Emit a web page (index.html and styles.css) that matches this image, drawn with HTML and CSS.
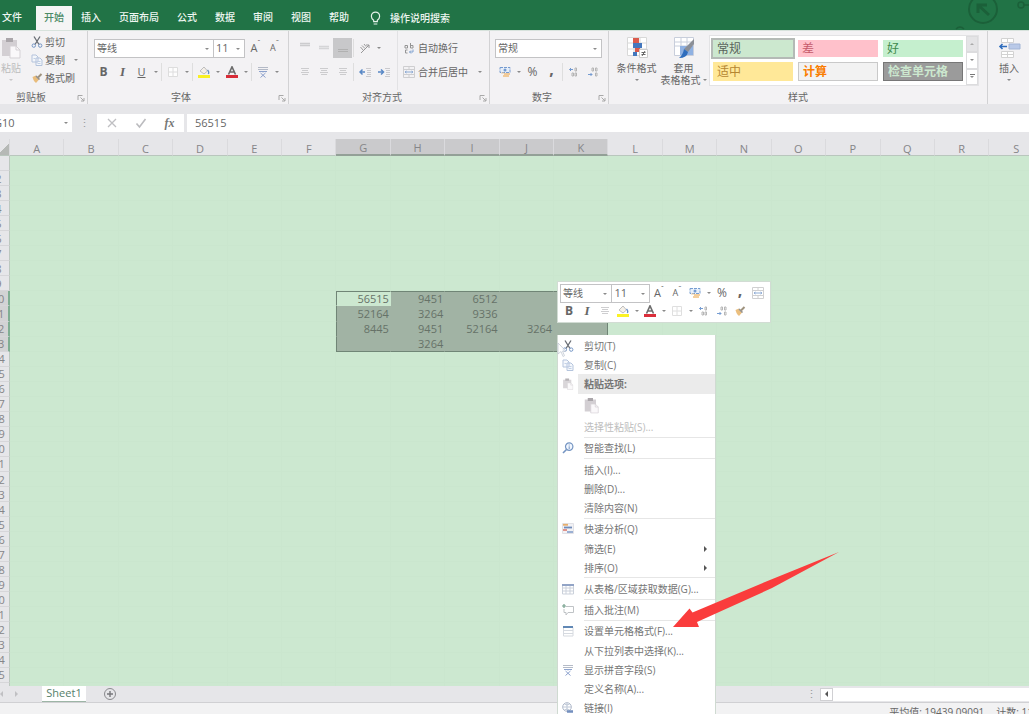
FILE: index.html
```html
<!DOCTYPE html>
<html lang="zh-CN">
<head>
<meta charset="utf-8">
<title>Sheet1</title>
<link rel="stylesheet" href="styles.css">
</head>
<body>
<svg class="defs" aria-hidden="true">
  <symbol id="i-cut" viewBox="0 0 12 12"><path d="M3 0.5L8 8.5M9 0.5L4 8.5" stroke="#50565e" stroke-width="1.3" fill="none"/><circle cx="2.8" cy="9.6" r="1.7" fill="none" stroke="#5f86bd"/><circle cx="9.2" cy="9.6" r="1.7" fill="none" stroke="#5f86bd"/></symbol>
  <symbol id="i-copy" viewBox="0 0 12 12"><path d="M1 1h4l2 2v5H1zM5 4h4l2 2v5.5H5z" fill="#f4f7fc" stroke="#a9bbd8"/><path d="M6.500 7.500h3M6.500 9.500h3M2.500 4.500h2" stroke="#b9c9e2"/></symbol>
  <symbol id="i-brush" viewBox="0 0 12 12"><path d="M1.500 5l3.500-1.500L8.500 7 5 11 3.500 9.500 2.500 8z" fill="#e8b468"/><path d="M5 4l3.500 3.500" stroke="#7d7f86" stroke-width="1.400"/><path d="M7 5.500L10.500 2" stroke="#8f8168" stroke-width="2"/></symbol>
  <symbol id="i-paste" viewBox="0 0 20 22"><path d="M1 3h15v16H1z" fill="#d3cfd3"/><path d="M5 1h7v4H5z" fill="#aaa6aa"/><path d="M9 9h6l4 4v8H9z" fill="#faf8fa" stroke="#d5d1d5"/><path d="M15 9v4h4" fill="none" stroke="#d5d1d5"/></symbol>
  <symbol id="i-top" viewBox="0 0 12 12"><path d="M1 1.500h10M1 3.500h10" stroke="#c6c6c8" stroke-width="1.500"/></symbol>
  <symbol id="i-mid" viewBox="0 0 12 12"><path d="M1 4.500h10M1 6.500h10" stroke="#d0d0d2" stroke-width="1.500"/></symbol>
  <symbol id="i-bot" viewBox="0 0 12 12"><path d="M1 7.500h10M1 9.500h10" stroke="#adadad"/></symbol>
  <symbol id="i-lines" viewBox="0 0 12 12"><path d="M2 2.500h8M3 4.500h6M2 6.500h8M3 8.500h6" stroke="#c6c6c8"/></symbol>
  <symbol id="i-orient" viewBox="0 0 12 12"><path d="M2 11L10 3M10 3v3M10 3H7" stroke="#888" fill="none"/><path d="M1.500 5l2.500 3M3 3.500l3 3M5 2l2 2.500" stroke="#8d8d8d" fill="none"/></symbol>
  <symbol id="i-out" viewBox="0 0 12 12"><path d="M6 6H1M3.500 3.500L1 6l2.500 2.500" stroke="#3f77be" stroke-width="1.500" fill="none"/><path d="M7 2.500h5M8 4.500h4M8 6.500h4M8 8.500h4M7 10.500h5" stroke="#c4c4c8"/></symbol>
  <symbol id="i-in" viewBox="0 0 12 12"><path d="M0 6h5M3 3.500L5.500 6 3 8.500" stroke="#3f77be" stroke-width="1.500" fill="none"/><path d="M7 2.500h5M8 4.500h4M8 6.500h4M8 8.500h4M7 10.500h5" stroke="#c4c4c8"/></symbol>
  <symbol id="i-wrap" viewBox="0 0 12 12"><path d="M2 3.500h2.500V6H2V3.500M7.500 1v5H10V3.500H7.500M4.500 8H2.500v3h2" fill="none" stroke="#858585"/><path d="M10 7.500V10H6.500M8 8.500L6.500 10 8 11.500" fill="none" stroke="#6d95ca"/></symbol>
  <symbol id="i-merge" viewBox="0 0 12 12"><path d="M0.500 0.500h11v11h-11zM6 0.500v3M6 8.500v3M0.500 3.500h11M0.500 8.500h11" fill="none" stroke="#c8c8ca"/><path d="M2 6h8M3.500 5L2 6l1.500 1M8.500 5L10 6 8.500 7" fill="none" stroke="#7d9fcf"/></symbol>
  <symbol id="i-money" viewBox="0 0 12 12"><path d="M1 1.500h10v5H1z" fill="#e4eefa" stroke="#5f8ccb" stroke-dasharray="3 1"/><circle cx="6" cy="4" r="1.500" fill="#5f8ccb"/><path d="M5 8h6M4 10h6" stroke="#efb567" stroke-width="1.600"/><path d="M2 7h3" stroke="#e8c493"/></symbol>
  <symbol id="i-dec1" viewBox="0 0 12 12"><path d="M5 3.500H1.500M3 2L1.500 3.500 3 5" stroke="#5f8ccb" fill="none"/><path d="M7 2h1.500v3H7zM4 7h1.500v3H4zM7 7h1.500v3H7z" stroke="#aaa" fill="none"/></symbol>
  <symbol id="i-dec2" viewBox="0 0 12 12"><path d="M1 8.500h4M3.500 7L5 8.500 3.500 10" stroke="#5f8ccb" fill="none"/><path d="M5 2h1.500v3H5zM8.500 2H10v3H8.500zM8.500 7H10v3H8.500z" stroke="#aaa" fill="none"/></symbol>
  <symbol id="i-border" viewBox="0 0 12 12"><path d="M1.500 1.500h9v9h-9zM6 1.500v9M1.500 6h9" fill="#fff" stroke="#dadada"/></symbol>
  <symbol id="i-fill" viewBox="0 0 12 12"><path d="M2 5l4-4 3.500 4L6 8z" fill="#f5efe6" stroke="#b4b4b4"/><path d="M9.500 4q2 2 .8 4" stroke="#4f7fbf" fill="none" stroke-width="1.300"/><path d="M0 9h12v3H0z" fill="#fbf000"/></symbol>
  <symbol id="i-color" viewBox="0 0 12 12"><path d="M2.500 8.500L6 0.800 9.500 8.500M3.800 6h4.400" fill="none" stroke="#555" stroke-width="1.600"/><path d="M0 9h12v3H0z" fill="#d40a18"/></symbol>
  <symbol id="i-phon" viewBox="0 0 12 12"><path d="M1 1.500h10M1 3.500h10" stroke="#a9b0be" fill="none"/><path d="M2 5.500h8M6 5v1.500M3.500 7L8.500 11.500M8.500 7L3.500 11.500" stroke="#7b93c6" fill="none"/></symbol>
  <symbol id="i-launch" viewBox="0 0 8 8"><path d="M1 6V1.500h4.500M3.500 3.500L7 7M7 4v3H4" stroke="#a8a8a8" fill="none"/></symbol>
  <symbol id="i-cond" viewBox="0 0 24 24"><path d="M2.500 1.500h19v18h-19zM2.500 7h19M2.500 13h19M9 1.500v18M15 1.500v18" fill="#fff" stroke="#d8d8d8"/><path d="M8 2h6v5H8zM10 12h5v4h-5z" fill="#db5a4c"/><path d="M8 7h9v5H8zM8 16h4v4H8z" fill="#4477bd"/><path d="M14.500 13.500h8v8h-8z" fill="#fff" stroke="#ccc"/><path d="M16.500 16.500h4M16.500 18.500h4M20 15l-3 5" stroke="#666"/></symbol>
  <symbol id="i-fmt" viewBox="0 0 24 24"><path d="M2.500 1.500h19v18h-19zM2.500 6h19M2.500 10h19M9 1.500v18M15 1.500v18" fill="#fff" stroke="#c8cedb"/><path d="M8 10h13v9H8z" fill="#8fb1e2"/><path d="M22 3v5l-6 8-4-3z" fill="#8b8f97"/><path d="M12 13l4 3q-1 6-9 6 4-3 5-9z" fill="#2f6dbd"/></symbol>
  <symbol id="i-ins" viewBox="0 0 24 24"><path d="M4.500 2.500h12v4h-12zM10.500 2.500v4M4.500 15.500h12v6h-12zM10.500 15.500v6M4.500 18.500h12" fill="#fff" stroke="#d2d2d2"/><path d="M12 8h11v5H12z" fill="#b9c9e8" stroke="#a3b5d6"/><path d="M10 10.500H3M5.500 8L3 10.500 5.500 13" stroke="#2f6dbd" stroke-width="1.600" fill="none"/></symbol>
  <symbol id="i-find" viewBox="0 0 12 12"><circle cx="7.200" cy="4.600" r="3.700" fill="#f0f6ff" stroke="#5d83b8" stroke-width="1.200"/><path d="M4.500 7.500L1 11" stroke="#5d83b8" stroke-width="1.600"/><path d="M7.200 2.500v1M7.200 4.300v2.700" stroke="#5d83b8"/></symbol>
  <symbol id="i-quick" viewBox="0 0 12 12"><path d="M0.500 0.500h11v10h-11z" fill="#f0f0f4" stroke="#dcdce2"/><path d="M1 1.800h5" stroke="#e3a053" stroke-width="1.800"/><path d="M2 4.500h8" stroke="#5878ae" stroke-width="1.800"/><path d="M1 7h4" stroke="#d9746b" stroke-width="1.800"/><path d="M5 9h6" stroke="#7e9ac8" stroke-width="1.800"/></symbol>
  <symbol id="i-table" viewBox="0 0 12 12"><path d="M0.500 1.500h11v9.500h-11zM4 2v9M8 2v9M0.500 5h11M0.500 8h11" fill="#fff" stroke="#c3c9d5"/><path d="M0 1h12v2H0z" fill="#8095bd"/></symbol>
  <symbol id="i-note" viewBox="0 0 12 12"><path d="M4 2.500h7.500v6H6l-2 2.500V8.500H2V5" fill="none" stroke="#b5b9bd"/><path d="M2 0v4M0 2h4" stroke="#5d8f78" stroke-width="1.200"/></symbol>
  <symbol id="i-cells" viewBox="0 0 12 12"><path d="M1.500 2.500h9.500v8.500H1.500zM1.500 5.500h9.500M1.500 8.500h9.500" fill="#fff" stroke="#d0d4db"/><path d="M1 1h10v2H1z" fill="#4674a9"/></symbol>
  <symbol id="i-link" viewBox="0 0 12 12"><circle cx="5" cy="5" r="4.300" fill="#fff" stroke="#9fabc0"/><path d="M5 1v8M1 5h8M2.500 2q2.500 2 5 0M2.500 8q2.500-2 5 0" stroke="#b4bfd1" fill="none"/><path d="M5 9.500h3M7 9.500h4" stroke="#5b7cb4" stroke-width="2.400"/></symbol>
</svg>

<div class="app">
  <header class="titlebar">
    <nav class="tabs">
      <a class="tab tab-file" href="#">文件</a>
      <a class="tab is-active" href="#">开始</a>
      <a class="tab" href="#">插入</a>
      <a class="tab" href="#">页面布局</a>
      <a class="tab" href="#">公式</a>
      <a class="tab" href="#">数据</a>
      <a class="tab" href="#">审阅</a>
      <a class="tab" href="#">视图</a>
      <a class="tab" href="#">帮助</a>
      <a class="tab tell" href="#"><svg class="bulb" viewBox="0 0 12 16"><path d="M4 11.500V10Q1.500 8 1.500 5.500a4.500 4.500 0 0 1 9 0Q10.500 8 8 10v1.500zM4 14h4" fill="none" stroke="#e6f2ea" stroke-width="1.300"/></svg>操作说明搜索</a>
    </nav>
    <svg class="deco" viewBox="0 0 75 30" aria-hidden="true"><g fill="none" stroke="#1b6039"><circle cx="29" cy="9" r="14" stroke-width="2"/><path d="M35 15L24 5M24 13V5h9" stroke-width="3"/><circle cx="67" cy="5" r="3" stroke-width="1.500"/><path d="M70 5h5" stroke-width="1.500"/><path d="M2 29q4-4 8 0" stroke-width="1.500"/></g></svg>
  </header>

  <section class="ribbon">
    <div class="group g-clip">
      <div class="body">
        <button class="big paste"><svg viewBox="0 0 20 22"><use href="#i-paste"/></svg><span>粘贴</span><i class="caret"></i></button>
        <div class="stack">
          <button class="item"><svg class="ic"><use href="#i-cut"/></svg>剪切</button>
          <button class="item"><svg class="ic"><use href="#i-copy"/></svg>复制<i class="caret far"></i></button>
          <button class="item"><svg class="ic"><use href="#i-brush"/></svg>格式刷</button>
        </div>
      </div>
      <div class="label"><span>剪贴板</span><svg class="launch"><use href="#i-launch"/></svg></div>
    </div>

    <div class="group g-font">
      <div class="body rows">
        <div class="row">
          <span class="pick pick-font"><select aria-label="字体"><option>等线</option></select></span><span class="pick pick-size"><select aria-label="字号"><option>11</option></select></span>
          <button class="tool grow" aria-label="增大字号">A<sup>ˆ</sup></button>
          <button class="tool grow small" aria-label="减小字号">A<sup>ˇ</sup></button>
        </div>
        <div class="row">
          <button class="tool bold">B</button><button class="tool ital">I</button><button class="tool under">U</button><i class="caret"></i><i class="sep"></i>
          <button class="tool" aria-label="边框"><svg class="ic"><use href="#i-border"/></svg></button><i class="caret"></i><i class="sep"></i>
          <button class="tool" aria-label="填充颜色"><svg class="ic"><use href="#i-fill"/></svg></button><i class="caret"></i>
          <button class="tool" aria-label="字体颜色"><svg class="ic"><use href="#i-color"/></svg></button><i class="caret"></i><i class="sep"></i>
          <button class="tool" aria-label="拼音"><svg class="ic"><use href="#i-phon"/></svg></button><i class="caret"></i>
        </div>
      </div>
      <div class="label"><span>字体</span><svg class="launch"><use href="#i-launch"/></svg></div>
    </div>

    <div class="group g-align">
      <div class="body">
        <div class="rows align-left">
          <div class="row">
            <button class="tool" aria-label="顶端对齐"><svg class="ic"><use href="#i-top"/></svg></button><button class="tool" aria-label="垂直居中"><svg class="ic"><use href="#i-mid"/></svg></button><button class="tool is-on" aria-label="底端对齐"><svg class="ic"><use href="#i-bot"/></svg></button><i class="sep"></i>
            <button class="tool" aria-label="方向"><svg class="ic"><use href="#i-orient"/></svg></button><i class="caret"></i>
          </div>
          <div class="row">
            <button class="tool" aria-label="左对齐"><svg class="ic"><use href="#i-lines"/></svg></button><button class="tool" aria-label="居中"><svg class="ic"><use href="#i-lines"/></svg></button><button class="tool" aria-label="右对齐"><svg class="ic"><use href="#i-lines"/></svg></button><i class="sep"></i>
            <button class="tool" aria-label="减少缩进量"><svg class="ic"><use href="#i-out"/></svg></button><button class="tool" aria-label="增加缩进量"><svg class="ic"><use href="#i-in"/></svg></button>
          </div>
        </div>
        <div class="rows align-right">
          <button class="item"><svg class="ic"><use href="#i-wrap"/></svg>自动换行</button>
          <button class="item"><svg class="ic"><use href="#i-merge"/></svg>合并后居中<i class="caret far"></i></button>
        </div>
      </div>
      <div class="label"><span>对齐方式</span><svg class="launch"><use href="#i-launch"/></svg></div>
    </div>

    <div class="group g-num">
      <div class="body rows">
        <div class="row"><span class="pick pick-num"><select aria-label="数字格式"><option>常规</option></select></span></div>
        <div class="row">
          <button class="tool" aria-label="会计数字格式"><svg class="ic"><use href="#i-money"/></svg></button><i class="caret"></i>
          <button class="tool pct">%</button><button class="tool comma">,</button><i class="sep"></i>
          <button class="tool" aria-label="增加小数位数"><svg class="ic"><use href="#i-dec1"/></svg></button><button class="tool" aria-label="减少小数位数"><svg class="ic"><use href="#i-dec2"/></svg></button>
        </div>
      </div>
      <div class="label"><span>数字</span><svg class="launch"><use href="#i-launch"/></svg></div>
    </div>

    <div class="group g-style">
      <div class="body">
        <button class="big"><svg><use href="#i-cond"/></svg><span>条件格式</span><i class="caret"></i></button>
        <button class="big"><svg><use href="#i-fmt"/></svg><span>套用</span><span class="with-caret">表格格式<i class="caret"></i></span></button>
        <div class="gallery">
          <div class="swatches">
            <button class="sw sw-normal">常规</button><button class="sw sw-bad">差</button><button class="sw sw-good">好</button>
            <button class="sw sw-neutral">适中</button><button class="sw sw-calc">计算</button><button class="sw sw-check">检查单元格</button>
          </div>
          <div class="scroller"><button class="off" aria-label="上一行"><i class="caret up"></i></button><button aria-label="下一行"><i class="caret"></i></button><button aria-label="其他"><i class="caret bar"></i></button></div>
        </div>
      </div>
      <div class="label"><span>样式</span></div>
    </div>

    <div class="group g-cells">
      <div class="body"><button class="big"><svg><use href="#i-ins"/></svg><span>插入</span><i class="caret"></i></button></div>
    </div>
  </section>

  <section class="formula">
    <div class="namebox"><input aria-label="名称框" value="G10"><i class="caret"></i></div>
    <span class="dots">⋮</span>
    <div class="fxbox">
      <button aria-label="取消"><svg class="ic" viewBox="0 0 12 12"><path d="M2 2l8 8M10 2l-8 8" stroke="#b5b5b8" stroke-width="1.300"/></svg></button>
      <button aria-label="输入"><svg class="ic" viewBox="0 0 12 12"><path d="M1.500 6.500l3 3.500 6-8" fill="none" stroke="#b0b0b4" stroke-width="1.600"/></svg></button>
      <button class="fx">fx</button>
    </div>
    <input class="formula-input" aria-label="编辑栏" value="56515">
  </section>

  <main class="sheet"><table class="cells" id="cells"></table></main>

  <footer class="sheetbar">
    <span class="navs"><i class="tri left"></i><i class="tri right"></i></span>
    <a class="sheet-tab" href="#">Sheet1</a>
    <button class="add" aria-label="新工作表"><svg viewBox="0 0 14 14"><circle cx="7" cy="7" r="5.500" fill="none" stroke="#8a8a8e"/><path d="M7 4v6M4 7h6" stroke="#77777b" stroke-width="1.400"/></svg></button>
    <span class="dots">⋮</span>
    <button class="scroll-btn" aria-label="向左滚动"><i class="tri left dark"></i></button>
    <div class="track"></div>
  </footer>
  <div class="status"><span>平均值: 19439.09091</span><span>计数: 11</span></div>

  <div class="minibar">
    <div class="row">
      <span class="pick mini-font"><select aria-label="字体"><option>等线</option></select></span><span class="pick mini-size"><select aria-label="字号"><option>11</option></select></span>
      <button class="tool grow" aria-label="增大字号">A<sup>ˆ</sup></button><button class="tool grow small" aria-label="减小字号">A<sup>ˇ</sup></button><button class="tool" aria-label="会计数字格式"><svg class="ic"><use href="#i-money"/></svg></button><i class="caret"></i><button class="tool pct">%</button><button class="tool comma">,</button><button class="tool" aria-label="合并"><svg class="ic"><use href="#i-merge"/></svg></button>
    </div>
    <div class="row">
      <button class="tool bold">B</button><button class="tool ital">I</button><button class="tool" aria-label="居中"><svg class="ic"><use href="#i-lines"/></svg></button><button class="tool" aria-label="填充颜色"><svg class="ic"><use href="#i-fill"/></svg></button><i class="caret"></i><button class="tool" aria-label="字体颜色"><svg class="ic"><use href="#i-color"/></svg></button><i class="caret"></i><button class="tool" aria-label="边框"><svg class="ic"><use href="#i-border"/></svg></button><i class="caret"></i><button class="tool" aria-label="增加小数位数"><svg class="ic"><use href="#i-dec1"/></svg></button><button class="tool" aria-label="减少小数位数"><svg class="ic"><use href="#i-dec2"/></svg></button><button class="tool" aria-label="格式刷"><svg class="ic"><use href="#i-brush"/></svg></button>
    </div>
  </div>

  <div class="menu">
    <button><svg class="ic"><use href="#i-cut"/></svg><span>剪切(T)</span></button>
    <button><svg class="ic"><use href="#i-copy"/></svg><span>复制(C)</span></button>
    <div class="head"><svg class="ic" viewBox="0 0 20 22"><use href="#i-paste"/></svg><span>粘贴选项:</span></div>
    <button class="paste-opt" aria-label="粘贴"><svg viewBox="0 0 20 22"><use href="#i-paste"/></svg></button>
    <button class="off"><span>选择性粘贴(S)...</span></button>
    <hr>
    <button><svg class="ic"><use href="#i-find"/></svg><span>智能查找(L)</span></button>
    <hr>
    <button><span>插入(I)...</span></button>
    <button><span>删除(D)...</span></button>
    <button><span>清除内容(N)</span></button>
    <hr>
    <button><svg class="ic"><use href="#i-quick"/></svg><span>快速分析(Q)</span></button>
    <button><span>筛选(E)</span><i class="tri right dark"></i></button>
    <button><span>排序(O)</span><i class="tri right dark"></i></button>
    <hr>
    <button><svg class="ic"><use href="#i-table"/></svg><span>从表格/区域获取数据(G)...</span></button>
    <hr>
    <button><svg class="ic"><use href="#i-note"/></svg><span>插入批注(M)</span></button>
    <hr>
    <button><svg class="ic"><use href="#i-cells"/></svg><span>设置单元格格式(F)...</span></button>
    <button><span>从下拉列表中选择(K)...</span></button>
    <button><svg class="ic"><use href="#i-phon"/></svg><span>显示拼音字段(S)</span></button>
    <button><span>定义名称(A)...</span></button>
    <button><svg class="ic"><use href="#i-link"/></svg><span>链接(I)</span></button>
  </div>

  <svg class="pointer" viewBox="0 0 10 16" aria-hidden="true"><path d="M1 1v11l3-2.500 2 5 1.500-.8-2-4.500h3.500z" fill="#fff" fill-opacity=".7" stroke="#c3c9d3" stroke-width=".8"/></svg>
  <svg class="arrow" viewBox="0 0 168 78" aria-hidden="true"><path d="M1 76L17.500 57.500 20.500 61.500 93 31 167 1 100 37 25 71 27 76z" fill="#fa3c3c"/></svg>
</div>
<script src="script.js"></script>
</body>
</html>
```
FILE: styles.css
```css
* { box-sizing: border-box; }

body {
  margin: 0;
  font: 10px/12px "Open Sans", "Noto Sans CJK SC", sans-serif;
  color: #666;
}

button, input, select {
  font: inherit;
  color: inherit;
  background: none;
  border: 0;
  padding: 0;
  margin: 0;
  border-radius: 0;
  white-space: nowrap;
}

a { color: inherit; text-decoration: none; }
.defs { display: none; }
.ic { width: 12px; height: 12px; flex: none; display: block; opacity: .85; }

.app {
  position: relative;
  display: flex;
  flex-direction: column;
  height: 100vh;
  overflow: hidden;
  background: #e6e6e9;
}

/* Small glyphs */
.caret {
  display: block;
  flex: none;
  width: 9px;
  height: 3px;
}
.caret::before {
  content: "";
  display: block;
  width: 0;
  margin: 0 auto;
  border: 2px solid transparent;
  border-top-color: #8a8a8a;
  border-bottom: 0;
}
.caret.up::before { transform: rotate(180deg); border-top-color: #aaa; }
.caret.bar { border-top: 1px solid #777; width: 5px; height: 5px; padding-top: 1px; }
.sep { flex: none; width: 1px; height: 18px; margin: 0 1px; background: #dedede; }
.tri { display: block; width: 0; border: 3px solid transparent; }
.tri.left { border-right-color: #c0c0c3; border-left: 0; }
.tri.right { border-left-color: #c0c0c3; border-right: 0; }
.tri.left.dark { border-right-color: #555; }
.tri.right.dark { border-left-color: #555; }
.dots { color: #999; font-size: 11px; text-align: center; }

/* Title bar */
.titlebar {
  flex: none;
  display: flex;
  justify-content: space-between;
  height: 30px;
  background: #217346;
}
.tabs { display: flex; align-items: flex-end; }
.tab {
  height: 24px;
  padding: 0 9px;
  line-height: 23px;
  color: #eef6f1;
  font-weight: 500;
  white-space: nowrap;
}
.tab-file { padding: 0 14px 0 2px; }
.tab.is-active { background: #f5f5f5; color: #4b8a66; padding: 0 8px; }
.tell { display: flex; align-items: center; gap: 9px; padding-left: 12px; }
.bulb { width: 11px; height: 15px; }
.deco { width: 75px; height: 30px; }

/* Ribbon */
.ribbon {
  flex: none;
  display: flex;
  height: 74px;
  background: #f3f2f4;
  border-top: 1px solid #d7e2dc;
}
.group {
  flex: none;
  display: flex;
  flex-direction: column;
  border-right: 1px solid #d2d2d4;
}
.body { flex: 1; display: flex; min-height: 0; }
.label { display: flex; align-items: center; height: 14px; }
.label span { flex: 1; text-align: center; }
.launch { width: 8px; height: 8px; margin: 1px 2px 0 4px; }
.row { display: flex; align-items: center; height: 20px; }
.rows { flex-direction: column; gap: 4px; padding-top: 7px; }
.tool {
  display: flex;
  align-items: center;
  justify-content: center;
  flex: none;
  width: 19px;
  height: 20px;
}
.tool.is-on { background: #c8c8ca; }
.bold { font-weight: 700; font-size: 12px; }
.comma { font-weight: 700; font-size: 16px; padding-bottom: 7px; }
.ital { font-weight: 700; font-style: italic; font-size: 13px; font-family: "Liberation Serif", serif; }
.under { font-size: 11px; text-decoration: underline; }
.pct { font-size: 12px; }
.grow { font-size: 11px; }
.grow.small { font-size: 9px; }
.grow sup { font-size: 8px; line-height: 8px; align-self: flex-start; }
.item { display: flex; align-items: center; gap: 3px; height: 20px; text-align: left; }
.far { margin-left: 4px; }

.pick { position: relative; display: block; height: 19px; background: #fff; border: 1px solid #c3c3c5; }
.pick + .pick { border-left: 0; }
.pick select { appearance: none; width: 100%; height: 100%; padding-left: 2px; font-size: 10px; }
.pick::after {
  content: "";
  position: absolute;
  right: 4px;
  top: 8px;
  border: 2px solid transparent;
  border-top-color: #8a8a8a;
  border-bottom: 0;
}
.pick-font { width: 120px; }
.pick-size { width: 31px; margin-right: 1px; }
.pick-size select, .mini-size select { font-size: 11px; }
.pick-num { width: 107px; }

.big {
  display: flex;
  flex-direction: column;
  align-items: center;
  width: 47px;
  padding-top: 5px;
}
.big svg { width: 24px; height: 24px; margin-bottom: 2px; }
.big .caret { margin-top: 5px; }
.with-caret { display: flex; align-items: center; padding-left: 3px; }
.with-caret .caret { margin: 0; }

.g-clip { width: 99px; margin-left: -11px; }
.g-clip .body { padding-left: 11px; }
.paste { width: 22px; color: #bcbcbc; }
.paste svg { width: 20px; height: 24px; }
.paste .caret { opacity: .4; }
.stack { display: flex; flex-direction: column; padding: 2px 0 0 9px; }
.stack .item { height: 18px; gap: 2px; }

.g-font { width: 201px; }
.g-font .body { padding-left: 6px; }
.g-font .rows, .g-num .rows { display: flex; }

.g-align { width: 201px; }
.align-left, .align-right { display: flex; }
.align-left { width: 108px; padding-left: 6px; }
.align-right { padding-left: 5px; border-left: 1px solid #e2e2e4; }

.g-num { width: 119px; }
.g-num .body { padding-left: 5px; }

.g-style { flex: 1; }
.g-style .body { padding-left: 4px; padding-right: 8px; }
.gallery { flex: 1; display: flex; height: 51px; margin: 4px 0 0 2px; background: #fff; border: 1px solid #e3e3e5; }
.swatches {
  flex: 1;
  display: grid;
  grid-template-columns: repeat(3, 1fr);
  gap: 5px;
  padding: 4px 3px;
}
.sw { padding-left: 4px; font-size: 12px; line-height: 16px; text-align: left; overflow: hidden; }
.sw-normal { background: #cce8cf; color: #59645b; outline: 2px solid #b4bab6; }
.sw-bad { background: #ffc1cb; color: #c55a6a; }
.sw-good { background: #c5efce; color: #3f8a4d; }
.sw-neutral { background: #ffe898; color: #b58631; }
.sw-calc { background: #f2f2f2; color: #fa7d00; font-weight: 700; border: 1px solid #c9c9c9; }
.sw-check { background: #9b9b9b; color: #cce8cf; font-weight: 700; border: 1px solid #777; }
.scroller { display: flex; flex-direction: column; width: 12px; }
.scroller button { flex: 1; display: grid; place-items: center; border: 1px solid #dcdcde; }
.scroller .off { background: #e4e4e6; }

.g-cells { width: 41px; border-right: 0; }
.g-cells .body { padding-left: 1px; }

/* Formula bar */
.formula { flex: none; display: flex; height: 35px; padding: 10px 0 7px; margin-left: -8px; font-size: 11px; }
.namebox { display: flex; align-items: center; width: 80px; padding-right: 2px; background: #fff; }
.namebox input { flex: 1; min-width: 0; padding-left: 2px; }
.formula .dots { width: 25px; line-height: 18px; }
.fxbox { display: flex; width: 87px; background: #fff; }
.fxbox button { flex: 1; display: grid; place-items: center; }
.fxbox .fx { font: italic 700 12px "Liberation Serif", serif; color: #777; }
.formula-input { flex: 1; min-width: 0; margin-left: 3px; padding-left: 8px; background: #fff; }

/* Grid */
.sheet { flex: 1; min-height: 0; overflow: hidden; background: #cce8d0; }
.cells {
  table-layout: fixed;
  border-collapse: separate;
  border-spacing: 0;
  width: calc(100% + 29px);
  height: calc(100% + 12px);
  margin-left: -14px;
  font-size: 11px;
  line-height: 13px;
}
.cells th, .cells td { height: 15px; padding: 0; }
.cells th { background: #e6e6e9; color: #858588; font-weight: 400; text-align: center; }
.cells thead th { height: 17px; padding-top: 2px; border-right: 1px solid #dadadd; border-bottom: 1px solid #b9c6bd; }
.cells thead th:first-child { width: 24px; background: linear-gradient(135deg, #e6e6e9 70%, #b6b9b6 70%); }
.cells tbody th { padding-left: 2px; border-bottom: 1px solid #d6d6d9; border-right: 1px solid #bcc8bf; }
.cells td { text-align: right; padding-right: 1px; color: #667268; border-right: 1px solid #cae6ce; border-bottom: 1px solid #cae6ce; }
.cells thead th.hot { background: #cacacc; border-bottom: 2px solid #93a097; }
.cells tbody th.hot { background: #d2d3d4; border-right: 2px solid #7fae92; }
.cells td.sel { background: #a1b3a4; border-color: #a1b3a4; }
.cells td.sel.active { background: #cce8d0; border-color: #cce8d0; }
.cells td.sel.t { border-top: 1px solid #708576; }
.cells td.sel.b { border-bottom-color: #708576; }
.cells td.sel.l { border-left: 1px solid #708576; }
.cells td.sel.r { border-right-color: #708576; }

/* Sheet bar and status */
.sheetbar { flex: none; display: flex; align-items: center; height: 17px; border-bottom: 1px solid #d0d0d3; }
.navs { display: flex; justify-content: space-between; width: 18px; margin-right: 24px; }
.sheet-tab {
  width: 44px;
  height: 16px;
  line-height: 14px;
  font-size: 11px;
  text-align: center;
  color: #55806a;
  background: #fff;
  border-bottom: 1px solid #9db5a6;
}
.add { width: 14px; height: 14px; margin: 0 auto 0 17px; }
.add svg { display: block; }
.sheetbar .dots { width: 18px; }
.scroll-btn { width: 13px; height: 13px; display: grid; place-items: center; background: #fff; border: 1px solid #d0d0d3; }
.track { width: 196px; height: 13px; background: #fff; }
.status {
  flex: none;
  display: flex;
  justify-content: flex-end;
  gap: 12px;
  height: 11px;
  padding-top: 3px;
  margin-right: -4px;
  background: #f2f2f3;
  white-space: nowrap;
}

/* Floating toolbar and context menu */
.minibar {
  position: absolute;
  left: 557px;
  top: 281px;
  width: 214px;
  padding: 2px;
  background: #fff;
  border: 1px solid #d2dcd4;
}
.minibar .row { height: 18px; }
.minibar .row .tool { width: 18px; height: 18px; }
.minibar .row:first-child .tool:last-child { margin-left: auto; margin-right: 1px; }
.mini-font { width: 53px; }
.mini-size { width: 38px; }

.menu {
  position: absolute;
  left: 557px;
  top: 335px;
  bottom: -5px;
  width: 159px;
  display: flex;
  flex-direction: column;
  padding-top: 1px;
  background: #fff;
  border: 1px solid #cfdad1;
  border-top: 0;
  color: #757575;
}
.menu > button, .menu > .head {
  flex: 1 1 19px;
  min-height: 0;
  display: grid;
  grid-template-columns: 22px 1fr 11px;
  align-items: center;
  padding-left: 4px;
  text-align: left;
}
.menu span { grid-column: 2; }
.menu .ic { grid-row: 1; }
.menu .tri { grid-row: 1; grid-column: 3; }
.menu .head { font-weight: 700; padding-left: 4px; background: linear-gradient(90deg, #fff 20px, #ebebeb 20px); }
.menu .off { color: #bdbdbd; }
.menu > .paste-opt { flex: none; height: 24px; padding-left: 26px; display: block; }
.paste-opt svg { width: 15px; height: 17px; display: block; }
.menu hr { flex: none; width: calc(100% - 26px); height: 2px; margin: 0 0 0 auto; border: 0; border-top: 1px solid #e6e6e6; }

.pointer { position: absolute; left: 557px; top: 342px; width: 10px; height: 16px; }
.arrow { position: absolute; left: 672px; top: 551px; width: 168px; height: 78px; }
```
FILE: script.js
```javascript
const columns = "ABCDEFGHIJKLMNOPQRS".split("");
const values = {
  G10: 56515, H10: 9451, I10: 6512,
  G11: 52164, H11: 3264, I11: 9336,
  G12: 8445, H12: 9451, I12: 52164, J12: 3264,
  H13: 3264
};
const range = { left: "G", right: "K", top: 10, bottom: 13 };
const table = document.getElementById("cells");
const inCols = c => c >= range.left && c <= range.right;
const inRows = r => r >= range.top && r <= range.bottom;

const headRow = table.createTHead().insertRow();
headRow.append(document.createElement("th"));
for (const c of columns) {
  const th = document.createElement("th");
  th.textContent = c;
  if (inCols(c)) th.className = "hot";
  headRow.append(th);
}

const body = table.createTBody();
for (let r = 1; r <= 36; r++) {
  const row = body.insertRow();
  const th = document.createElement("th");
  th.textContent = r;
  if (inRows(r)) th.className = "hot";
  row.append(th);
  for (const c of columns) {
    const cell = row.insertCell();
    cell.textContent = values[c + r] ?? "";
    if (inCols(c) && inRows(r)) {
      cell.classList.add("sel");
      if (r === range.top) cell.classList.add("t");
      if (r === range.bottom) cell.classList.add("b");
      if (c === range.left) cell.classList.add("l");
      if (c === range.right) cell.classList.add("r");
      if (c === "G" && r === 10) cell.classList.add("active");
    }
  }
}
```
